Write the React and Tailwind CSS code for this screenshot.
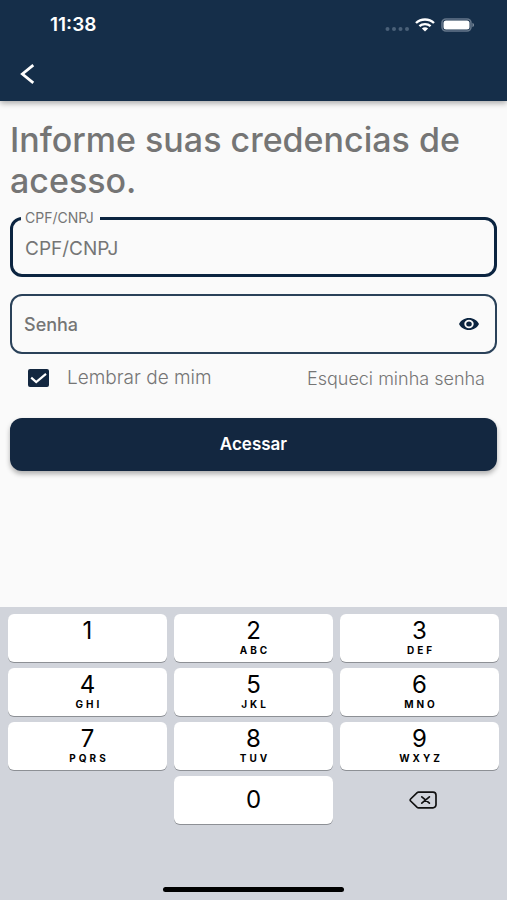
import React, { useState } from "react";

const keys = [
  { digit: "1", letters: "" },
  { digit: "2", letters: "ABC" },
  { digit: "3", letters: "DEF" },
  { digit: "4", letters: "GHI" },
  { digit: "5", letters: "JKL" },
  { digit: "6", letters: "MNO" },
  { digit: "7", letters: "PQRS" },
  { digit: "8", letters: "TUV" },
  { digit: "9", letters: "WXYZ" },
];

const StatusBar = () => (
  <div className="flex h-[50px] items-center justify-between pl-[50px] pr-8">
    <span className="text-[19px] font-semibold">11:38</span>
    <div className="flex items-center gap-1.5">
      <svg width="24" height="14" viewBox="0 0 24 14" fill="#4a6078" aria-hidden="true">
        <circle cx="2.5" cy="11" r="2" />
        <circle cx="9" cy="11" r="2" />
        <circle cx="15.5" cy="11" r="2" />
        <circle cx="22" cy="11" r="2" />
      </svg>
      <svg width="20" height="14" viewBox="0 0 20 14" fill="none" stroke="#fff" strokeWidth="2.4" aria-hidden="true">
        <path d="M1 5C5.8 0.3 14.2 0.3 19 5" />
        <path d="M4.4 8.2c3.2-2.8 8-2.8 11.2 0" />
        <path d="M6.9 10.4c1.8-1.6 4.4-1.6 6.2 0L10 13.4z" fill="#fff" stroke="none" />
      </svg>
      <svg width="34" height="14" viewBox="0 0 34 14" aria-hidden="true">
        <rect x="1" y="1" width="29" height="12" rx="4" fill="none" stroke="#64768a" strokeWidth="1.6" />
        <rect x="2.5" y="2.5" width="26" height="9" rx="2.5" fill="#fff" />
        <path d="M31.5 4.8c2 .8 2 3.6 0 4.4z" fill="#8795a5" />
      </svg>
    </div>
  </div>
);

const Keypad = ({ onPress, onDelete }) => {
  const keyClass =
    "flex h-12 flex-col items-center rounded-md bg-white pt-[3px] text-black shadow-[0_1px_0_#8d9095]";

  return (
    <div className="bg-[#d1d4db] px-2 pt-[7px] pb-2">
      <div className="grid grid-cols-3 gap-x-[7px] gap-y-1.5">
        {keys.map((key) => (
          <button key={key.digit} type="button" className={keyClass} onClick={() => onPress(key.digit)}>
            <span className="text-[24px] leading-[27px]">{key.digit}</span>
            {key.letters && (
              <span className="pl-[3px] text-[10px] leading-3 font-bold tracking-[3px]">{key.letters}</span>
            )}
          </button>
        ))}
        <button
          type="button"
          className="col-start-2 flex h-12 items-center justify-center rounded-md bg-white text-[24px] text-black shadow-[0_1px_0_#8d9095]"
          onClick={() => onPress("0")}
        >
          0
        </button>
        <button type="button" aria-label="Apagar" className="flex h-12 items-center justify-center pl-1.5" onClick={onDelete}>
          <svg width="28" height="18" viewBox="0 0 28 18" fill="none" stroke="#111" strokeWidth="1.7" strokeLinejoin="round" strokeLinecap="round">
            <path d="M9.5 1.2H24a3 3 0 0 1 3 3v9.600a3 3 0 0 1-3 3H9.500a2 2 0 0 1-1.300-.5L1.600 10a1.400 1.400 0 0 1 0-2l6.600-6.300a2 2 0 0 1 1.300-.5z" />
            <path d="M12.8 5.800l7.600 6.400M20.400 5.800l-7.600 6.400" />
          </svg>
        </button>
      </div>
      <div className="mx-auto mt-[63px] h-[5px] w-[37%] rounded-full bg-black" />
    </div>
  );
};

const App = () => {
  const [cpf, setCpf] = useState("");
  const [password, setPassword] = useState("");
  const [showPassword, setShowPassword] = useState(false);
  const [remember, setRemember] = useState(true);

  return (
    <div className="flex min-h-screen flex-col bg-[#fafafa] font-['Inter',sans-serif] text-[#757575]">
      <header className="bg-[#152e49] pb-[3px] text-white shadow-[0_2px_6px_rgba(0,0,0,0.35)]">
        <StatusBar />
        <button type="button" aria-label="Voltar" className="flex h-12 items-center pl-5">
          <svg width="15" height="20" viewBox="0 0 15 20" fill="none" stroke="#fff" strokeWidth="2.8">
            <path d="M13.3 1.2L2.4 10l10.9 8.8" />
          </svg>
        </button>
      </header>

      <form className="flex-1 px-2.5 pt-[18px]" onSubmit={(e) => e.preventDefault()}>
        <h1 className="text-[34px] leading-[41px] font-medium">Informe suas credencias de acesso.</h1>

        <fieldset className="mt-[9px] rounded-xl border-3 border-[#0b2440]">
          <legend className="ml-2 pr-1.5 pl-1 text-[14px] leading-4">
            <label htmlFor="cpf">CPF/CNPJ</label>
          </legend>
          <input
            id="cpf"
            type="text"
            inputMode="numeric"
            placeholder="CPF/CNPJ"
            value={cpf}
            onChange={(e) => setCpf(e.target.value)}
            className="block h-12 w-full px-3 pb-1 text-[19px] outline-none placeholder:text-[#757575]"
          />
        </fieldset>

        <div className="mt-[17px] flex h-[60px] items-center rounded-xl border-2 border-[#2a4159] pr-4 pl-3">
          <input
            type={showPassword ? "text" : "password"}
            aria-label="Senha"
            placeholder="Senha"
            value={password}
            onChange={(e) => setPassword(e.target.value)}
            className="min-w-0 flex-1 text-[18px] font-medium outline-none placeholder:text-[#757575]"
          />
          <button type="button" aria-label="Mostrar senha" onClick={() => setShowPassword(!showPassword)}>
            <svg width="20" height="12" viewBox="0 0 20 12">
              <path
                fill="#0b2440"
                fillRule="evenodd"
                d="M10 0C5.500 0 1.700 2.500 0 6c1.700 3.500 5.500 6 10 6s8.300-2.500 10-6c-1.700-3.500-5.500-6-10-6zm0 10.200a4.700 4.200 0 1 1 0-8.400 4.700 4.200 0 0 1 0 8.400zm0-6.700a2.800 2.500 0 1 0 0 5 2.800 2.500 0 0 0 0-5z"
              />
            </svg>
          </button>
        </div>

        <div className="flex h-12 items-center justify-between pr-3 pl-[18px] font-light">
          <label className="flex items-center gap-[18px] text-[19px]">
            <span className="grid">
              <input
                type="checkbox"
                checked={remember}
                onChange={(e) => setRemember(e.target.checked)}
                className="peer col-start-1 row-start-1 h-[18px] w-[21px] appearance-none rounded-xs border-2 border-[#132740] checked:bg-[#132740]"
              />
              <svg
                className="pointer-events-none invisible col-start-1 row-start-1 peer-checked:visible"
                width="21"
                height="18"
                viewBox="0 0 21 18"
                fill="none"
                stroke="#fff"
                strokeWidth="2.2"
              >
                <path d="M3.200 8.700l5 4.300L18 4.800" />
              </svg>
            </span>
            Lembrar de mim
          </label>
          <a href="#" className="text-[18px]">Esqueci minha senha</a>
        </div>

        <button
          type="submit"
          className="mt-4 h-[53px] w-full rounded-xl bg-[#132740] text-[17px] font-semibold text-white shadow-[0_3px_5px_rgba(0,0,0,0.3)]"
        >
          Acessar
        </button>
      </form>

      <Keypad onPress={(digit) => setCpf(cpf + digit)} onDelete={() => setCpf(cpf.slice(0, -1))} />
    </div>
  );
};

export default App;
